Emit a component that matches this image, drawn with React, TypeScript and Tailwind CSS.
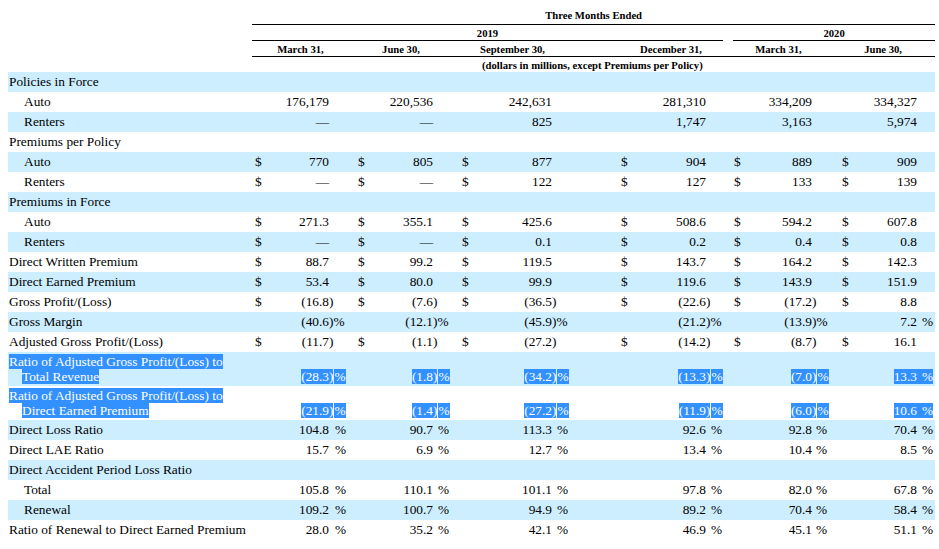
import React from "react";

type Kind = "num" | "usd" | "pct";

type Row = {
  label: string;
  sub?: string;
  indent?: boolean;
  kind?: Kind;
  vals?: string[];
  hl?: boolean;
};

const BAND = "bg-[#cceeff]";
const HL = "bg-[#3390ff] text-white";
// left padding of the "$" cell in each period group
const DPAD = ["pl-[3px]", "pl-[9px]", "pl-[9px]", "pl-[49px]", "pl-[8px]", "pl-[11px]"];
// left padding of a lone "%" in each period group
const PPAD = ["pl-[6px]", "pl-[5px]", "pl-[5px]", "pl-[5px]", "pl-[4px]", "pl-[5px]"];

const rows: Row[] = [
  { label: "Policies in Force" },
  { label: "Auto", indent: true, kind: "num", vals: ["176,179", "220,536", "242,631", "281,310", "334,209", "334,327"] },
  { label: "Renters", indent: true, kind: "num", vals: ["—", "—", "825", "1,747", "3,163", "5,974"] },
  { label: "Premiums per Policy" },
  { label: "Auto", indent: true, kind: "usd", vals: ["770", "805", "877", "904", "889", "909"] },
  { label: "Renters", indent: true, kind: "usd", vals: ["—", "—", "122", "127", "133", "139"] },
  { label: "Premiums in Force" },
  { label: "Auto", indent: true, kind: "usd", vals: ["271.3", "355.1", "425.6", "508.6", "594.2", "607.8"] },
  { label: "Renters", indent: true, kind: "usd", vals: ["—", "—", "0.1", "0.2", "0.4", "0.8"] },
  { label: "Direct Written Premium", kind: "usd", vals: ["88.7", "99.2", "119.5", "143.7", "164.2", "142.3"] },
  { label: "Direct Earned Premium", kind: "usd", vals: ["53.4", "80.0", "99.9", "119.6", "143.9", "151.9"] },
  { label: "Gross Profit/(Loss)", kind: "usd", vals: ["(16.8)", "(7.6)", "(36.5)", "(22.6)", "(17.2)", "8.8"] },
  { label: "Gross Margin", kind: "pct", vals: ["(40.6)", "(12.1)", "(45.9)", "(21.2)", "(13.9)", "7.2"] },
  { label: "Adjusted Gross Profit/(Loss)", kind: "usd", vals: ["(11.7)", "(1.1)", "(27.2)", "(14.2)", "(8.7)", "16.1"] },
  {
    label: "Ratio of Adjusted Gross Profit/(Loss) to ",
    sub: "Total Revenue",
    hl: true,
    kind: "pct",
    vals: ["(28.3)", "(1.8)", "(34.2)", "(13.3)", "(7.0)", "13.3"],
  },
  {
    label: "Ratio of Adjusted Gross Profit/(Loss) to ",
    sub: "Direct Earned Premium",
    hl: true,
    kind: "pct",
    vals: ["(21.9)", "(1.4)", "(27.2)", "(11.9)", "(6.0)", "10.6"],
  },
  { label: "Direct Loss Ratio", kind: "pct", vals: ["104.8", "90.7", "113.3", "92.6", "92.8", "70.4"] },
  { label: "Direct LAE Ratio", kind: "pct", vals: ["15.7", "6.9", "12.7", "13.4", "10.4", "8.5"] },
  { label: "Direct Accident Period Loss Ratio" },
  { label: "Total", indent: true, kind: "pct", vals: ["105.8", "110.1", "101.1", "97.8", "82.0", "67.8"] },
  { label: "Renewal", indent: true, kind: "pct", vals: ["109.2", "100.7", "94.9", "89.2", "70.4", "58.4"] },
  { label: "Ratio of Renewal to Direct Earned Premium", kind: "pct", vals: ["28.0", "35.2", "42.1", "46.9", "45.1", "51.1"] },
];

const dates = ["March 31,", "June 30,", "September 30,", "December 31,", "March 31,", "June 30,"];
const dateAlign = [
  "justify-center",
  "justify-center",
  "justify-center",
  "justify-end pr-[24px]",
  "justify-center",
  "justify-center",
];

function splitVal(v: string, kind: Kind) {
  if (v.startsWith("(")) {
    return { num: v.slice(0, -1), sfx: kind === "pct" ? ")%" : ")" };
  }
  return { num: v, sfx: kind === "pct" ? "%" : "" };
}

function ValueCells({ row, band }: { row: Row; band: string }) {
  const cell = `p-0 whitespace-nowrap ${band} ${row.hl ? "align-bottom pb-[2px] leading-[15px]" : "leading-[20px]"}`;
  if (!row.vals) {
    return (
      <>
        {Array.from({ length: 18 }).map((_, i) => (
          <td key={i} className={cell} />
        ))}
      </>
    );
  }
  return (
    <>
      {row.vals.map((v, g) => {
        const { num, sfx } = splitVal(v, row.kind!);
        const lonePct = sfx === "%";
        return (
          <React.Fragment key={g}>
            <td className={`${cell} ${DPAD[g]} text-left`}>{row.kind === "usd" ? "$" : ""}</td>
            <td className={`${cell} text-right`}>
              {row.hl ? <span className={HL}>{num}</span> : num}
            </td>
            <td className={`${cell} text-left ${lonePct && !row.hl ? PPAD[g] : ""}`}>
              {row.hl ? (
                lonePct ? (
                  <span className={`${HL} ${PPAD[g]}`}>%</span>
                ) : (
                  <>
                    <span className={HL}>)</span>
                    <span className={`${HL} ml-px`}>%</span>
                  </>
                )
              ) : (
                sfx
              )}
            </td>
          </React.Fragment>
        );
      })}
    </>
  );
}

export default function App() {
  return (
    <div className="min-h-screen bg-white pl-[8px] text-black font-['Liberation_Serif','Times_New_Roman',serif]">
      <table className="w-[927px] table-fixed border-separate border-spacing-0">
        <colgroup>
          <col className="w-[244px]" />
          <col className="w-[18px]" />
          <col className="w-[59px]" />
          <col className="w-[20px]" />
          <col className="w-[24px]" />
          <col className="w-[60px]" />
          <col className="w-[20px]" />
          <col className="w-[27px]" />
          <col className="w-[72px]" />
          <col className="w-[20px]" />
          <col className="w-[58px]" />
          <col className="w-[76px]" />
          <col className="w-[20px]" />
          <col className="w-[19px]" />
          <col className="w-[67px]" />
          <col className="w-[19px]" />
          <col className="w-[19px]" />
          <col className="w-[67px]" />
          <col className="w-[18px]" />
        </colgroup>
        <thead className="text-[10.67px] font-bold leading-[12px]">
          <tr>
            <td className="p-0" />
            <td colSpan={18} className="p-0">
              <div className="flex h-[25px] items-end justify-center border-b border-black pb-[3px]">
                Three Months Ended
              </div>
            </td>
          </tr>
          <tr>
            <td className="p-0" />
            <td colSpan={12} className="p-0">
              <div className="mr-[3px] flex h-[16px] items-center justify-center border-b border-black">2019</div>
            </td>
            <td colSpan={6} className="p-0">
              <div className="ml-[7px] flex h-[16px] items-center justify-center border-b border-black">2020</div>
            </td>
          </tr>
          <tr>
            <td className="p-0" />
            {dates.map((d, i) => (
              <td key={i} colSpan={3} className="p-0">
                <div className={`flex h-[16px] items-center whitespace-nowrap border-b border-black ${dateAlign[i]}`}>
                  {d}
                </div>
              </td>
            ))}
          </tr>
          <tr>
            <td className="p-0" />
            <td colSpan={6} className="p-0" />
            <td colSpan={12} className="p-0">
              <div className="flex h-[15px] items-center whitespace-nowrap pl-[29px]">
                (dollars in millions, except Premiums per Policy)
              </div>
            </td>
          </tr>
        </thead>
        <tbody className="text-[13.33px]">
          {rows.map((r, i) => {
            const band = i % 2 === 0 ? BAND : "bg-white";
            return (
              <tr key={i} className={r.hl ? "h-[34px]" : "h-[20px]"}>
                <td className={`p-0 whitespace-nowrap ${band} ${r.indent ? "pl-[16px]" : "pl-[1px]"}`}>
                  {r.hl ? (
                    <div className="py-[2px] leading-[15px]">
                      <div>
                        <span className={HL}>{r.label}</span>
                      </div>
                      <div className="pl-[13px]">
                        <span className={HL}>{r.sub}</span>
                      </div>
                    </div>
                  ) : (
                    <span className="leading-[20px]">{r.label}</span>
                  )}
                </td>
                <ValueCells row={r} band={band} />
              </tr>
            );
          })}
        </tbody>
      </table>
    </div>
  );
}
